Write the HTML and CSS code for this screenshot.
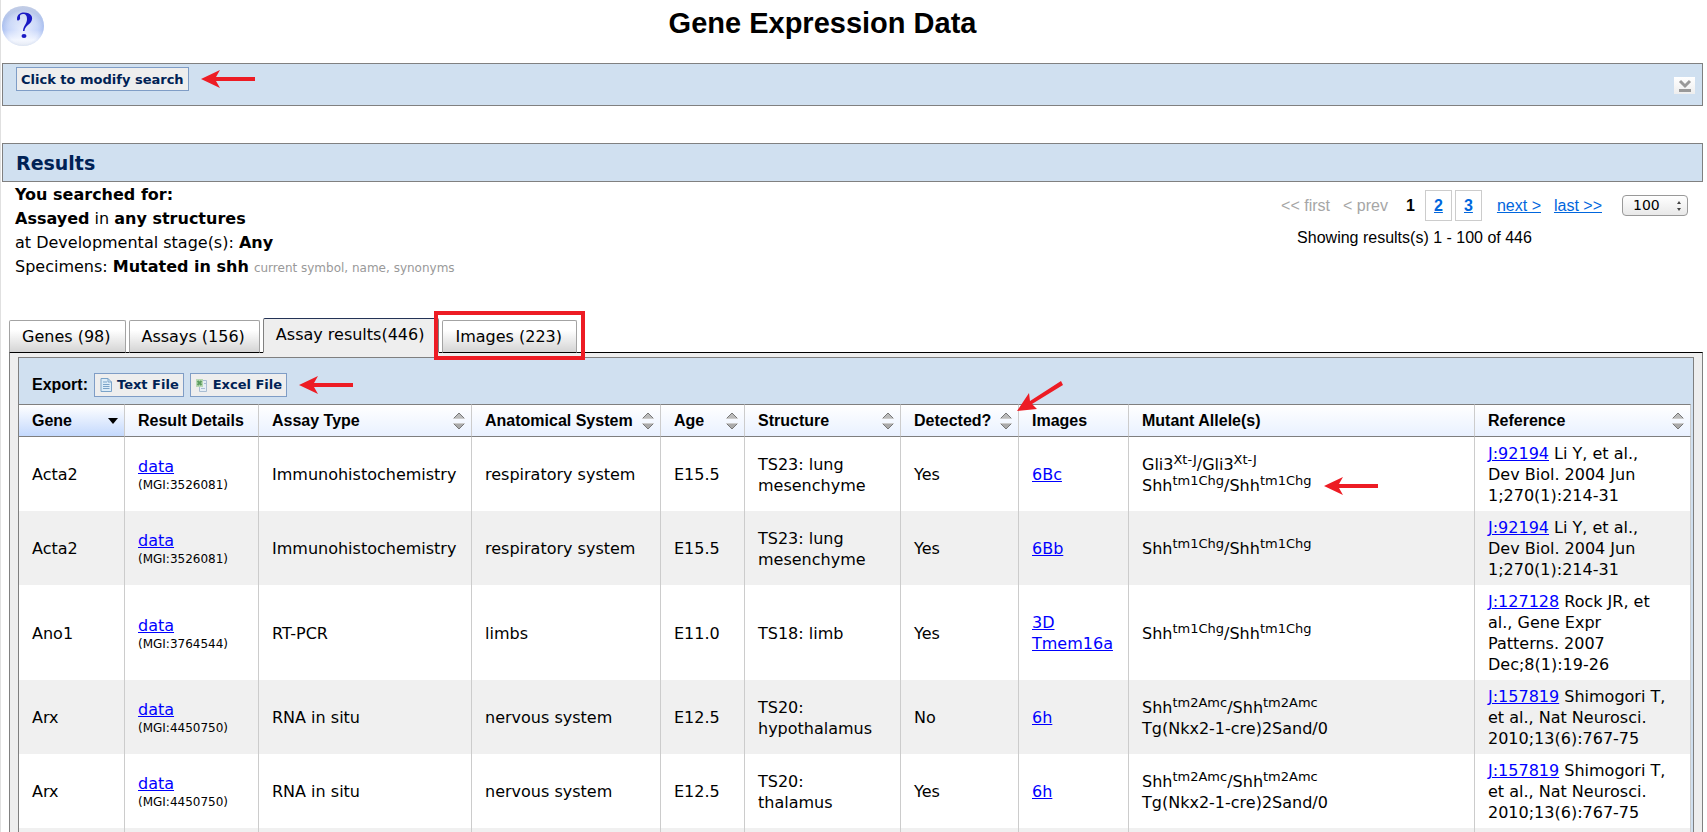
FILE: index.html
```html
<!DOCTYPE html>
<html lang="en">
<head>
<meta charset="utf-8">
<title>Gene Expression Data</title>
<link rel="stylesheet" href="styles.css">
</head>
<body>
<svg class="defs" aria-hidden="true">
  <symbol id="arrow" viewBox="0 0 54 18"><path d="M0 9L19 0L15 7H54V11H15L19 18Z" fill="#ed1c24"/></symbol>
  <symbol id="sort" viewBox="0 0 12 18">
    <path d="M6 1L11 6H1Z" fill="#bbb"/><path d="M1 6L6 1L11 6" fill="none" stroke="#777"/><path d="M0 6.5H12" stroke="#ccc"/>
    <path d="M1 12H11L6 17Z" fill="#aaa"/><path d="M1 12L6 17L11 12" fill="none" stroke="#777"/><path d="M0 11.5H12" stroke="#ccc"/>
  </symbol>
</svg>

<header class="page-header">
  <a class="help" href="#help" aria-label="Help">
    <svg width="44" height="42" viewBox="0 0 44 42">
      <defs>
        <linearGradient id="ball" x1="0" y1="0" x2="0" y2="1">
          <stop offset="0" stop-color="#d9dde8"/><stop offset=".3" stop-color="#c3d2f4"/><stop offset=".6" stop-color="#b4c8f8"/><stop offset=".85" stop-color="#eef3ff"/><stop offset="1" stop-color="#dde4f0"/>
        </linearGradient>
        <radialGradient id="shine" cx=".5" cy=".6" r=".5">
          <stop offset="0" stop-color="#fff" stop-opacity=".7"/><stop offset=".7" stop-color="#fff" stop-opacity=".25"/><stop offset="1" stop-color="#8fa8de" stop-opacity=".3"/>
        </radialGradient>
      </defs>
      <ellipse cx="21" cy="21" rx="21" ry="20" fill="url(#ball)"/>
      <ellipse cx="21" cy="21" rx="21" ry="20" fill="url(#shine)"/>
      <path d="M15 14C15 9 19 7.500 22 7.500C29 7.500 32 12 29 17C27 20 23 21 22.500 26H21C21 21 25 19 25 14C25 11 24 9 21 9C19 9 17.500 10 18 12C19 15 15 17 15 14Z" fill="#1a1ac4"/>
      <ellipse cx="22" cy="31" rx="2.500" ry="2" fill="#1a1ac4"/>
    </svg>
  </a>
  <h1 class="title">Gene Expression Data</h1>
</header>

<section class="bar search-bar">
  <div class="search-actions">
    <button class="btn" type="button">Click to modify search</button>
    <svg class="arrow" width="54" height="18"><use href="#arrow"/></svg>
  </div>
  <button class="toggle" type="button" aria-label="Expand search">
    <svg width="21" height="17" viewBox="0 0 21 17"><path d="M6 4L11 9L16 4" fill="none" stroke="#999" stroke-width="3"/><path d="M5 13.5H17" stroke="#999" stroke-width="3"/></svg>
  </button>
</section>

<section class="bar results-bar"><h2 class="results-title">Results</h2></section>

<section class="summary">
  <div class="query">
    <div><b>You searched for:</b></div>
    <div><b>Assayed</b> in <b>any structures</b></div>
    <div>at Developmental stage(s): <b>Any</b></div>
    <div>Specimens: <b>Mutated in shh</b> <span class="note">current symbol, name, synonyms</span></div>
  </div>
  <div class="paging">
    <nav class="pages" aria-label="Pages">
      <span class="off">&lt;&lt; first</span>
      <span class="off">&lt; prev</span>
      <span class="nums"><span class="current">1</span><a class="num" href="#2">2</a><a class="num" href="#3">3</a></span>
      <a href="#next">next &gt;</a>
      <a href="#last">last &gt;&gt;</a>
      <span class="size">
        <select class="size-select" aria-label="Rows per page"><option>100</option></select>
        <svg class="size-mark" width="6" height="10" viewBox="0 0 6 10"><path d="M3 0L5 3H1ZM3 10L5 7H1Z" fill="#444"/></svg>
      </span>
    </nav>
    <div class="showing">Showing results(s) 1 - 100 of 446</div>
  </div>
</section>

<main class="tabview">
  <nav class="tabs">
    <a class="tab" href="#genes">Genes (98)</a>
    <a class="tab" href="#assays">Assays (156)</a>
    <a class="tab active" href="#results">Assay results(446)</a>
    <a class="tab marked" href="#images">Images (223)</a>
  </nav>
  <div class="panel">
    <div class="sheet">
      <div class="export">
        <b class="export-label">Export:</b>
        <button class="btn" type="button">
          <svg width="14" height="16" viewBox="0 0 14 16"><path d="M2 1.500H9L12.500 5V14.500H2Z" fill="#dcecf8" stroke="#7ba3c8"/><path d="M9 1.500V5H12.500M4 5H8M4 7.500H10.500M4 9.500H10.500M4 11.500H10.500" fill="none" stroke="#7ba3c8"/></svg>
          Text File</button>
        <button class="btn" type="button">
          <svg width="14" height="16" viewBox="0 0 14 16"><path d="M4.500 3.500H11.500V14.500H4.500Z" fill="#e6eef6" stroke="#a9bdd2"/><path d="M6 11.500H10M9 6.500H11" stroke="#a9bdd2"/><path d="M1 2H8V10H1Z" fill="#b8d8b4"/><path d="M2.500 4L6.500 8M6.500 4L2.500 8" stroke="#5c9c60" stroke-width="2"/></svg>
          Excel File</button>
        <svg class="arrow" width="54" height="18"><use href="#arrow"/></svg>
      </div>
      <table class="grid">
        <colgroup><col class="c-gene"><col class="c-details"><col class="c-type"><col class="c-system"><col class="c-age"><col class="c-structure"><col class="c-detected"><col class="c-images"><col><col class="c-reference"></colgroup>
        <thead>
          <tr>
            <th class="sorted"><button class="sorter" type="button">Gene<svg width="10" height="6" viewBox="0 0 10 6"><path d="M0 0H10L5 6Z"/></svg></button></th>
            <th>Result Details</th>
            <th><button class="sorter" type="button">Assay Type<svg width="12" height="18"><use href="#sort"/></svg></button></th>
            <th><button class="sorter" type="button">Anatomical System<svg width="12" height="18"><use href="#sort"/></svg></button></th>
            <th><button class="sorter" type="button">Age<svg width="12" height="18"><use href="#sort"/></svg></button></th>
            <th><button class="sorter" type="button">Structure<svg width="12" height="18"><use href="#sort"/></svg></button></th>
            <th class="pointed"><button class="sorter" type="button">Detected?<svg width="12" height="18"><use href="#sort"/></svg></button>
              <svg class="pointer" width="48" height="32" viewBox="0 0 48 32"><path d="M0 30L12 12L13 20L44 0L46 4L15 23L20 28Z" fill="#ed1c24"/></svg></th>
            <th>Images</th>
            <th>Mutant Allele(s)</th>
            <th><button class="sorter" type="button">Reference<svg width="12" height="18"><use href="#sort"/></svg></button></th>
          </tr>
        </thead>
        <tbody>
          <tr>
            <td>Acta2</td><td><a href="#d">data</a><span class="mgi">(MGI:3526081)</span></td><td>Immunohistochemistry</td><td>respiratory system</td><td>E15.5</td><td class="roomy">TS23: lung mesenchyme</td><td>Yes</td><td><a href="#i">6Bc</a></td>
            <td>Gli3<sup>Xt-J</sup>/Gli3<sup>Xt-J</sup><br><span class="noted">Shh<sup>tm1Chg</sup>/Shh<sup>tm1Chg</sup><svg class="note-arrow" width="54" height="18"><use href="#arrow"/></svg></span></td>
            <td class="roomy"><a href="#r">J:92194</a> Li Y, et al., Dev Biol. 2004 Jun 1;270(1):214-31</td>
          </tr>
          <tr>
            <td>Acta2</td><td><a href="#d">data</a><span class="mgi">(MGI:3526081)</span></td><td>Immunohistochemistry</td><td>respiratory system</td><td>E15.5</td><td class="roomy">TS23: lung mesenchyme</td><td>Yes</td><td><a href="#i">6Bb</a></td>
            <td>Shh<sup>tm1Chg</sup>/Shh<sup>tm1Chg</sup></td>
            <td class="roomy"><a href="#r">J:92194</a> Li Y, et al., Dev Biol. 2004 Jun 1;270(1):214-31</td>
          </tr>
          <tr>
            <td>Ano1</td><td><a href="#d">data</a><span class="mgi">(MGI:3764544)</span></td><td>RT-PCR</td><td>limbs</td><td>E11.0</td><td class="roomy">TS18: limb</td><td>Yes</td><td><a href="#i">3D Tmem16a</a></td>
            <td>Shh<sup>tm1Chg</sup>/Shh<sup>tm1Chg</sup></td>
            <td class="roomy"><a href="#r">J:127128</a> Rock JR, et al., Gene Expr Patterns. 2007 Dec;8(1):19-26</td>
          </tr>
          <tr>
            <td>Arx</td><td><a href="#d">data</a><span class="mgi">(MGI:4450750)</span></td><td>RNA in situ</td><td>nervous system</td><td>E12.5</td><td class="roomy">TS20: hypothalamus</td><td>No</td><td><a href="#i">6h</a></td>
            <td>Shh<sup>tm2Amc</sup>/Shh<sup>tm2Amc</sup><br>Tg(Nkx2-1-cre)2Sand/0</td>
            <td class="roomy"><a href="#r">J:157819</a> Shimogori T, et al., Nat Neurosci. 2010;13(6):767-75</td>
          </tr>
          <tr>
            <td>Arx</td><td><a href="#d">data</a><span class="mgi">(MGI:4450750)</span></td><td>RNA in situ</td><td>nervous system</td><td>E12.5</td><td class="roomy">TS20: thalamus</td><td>Yes</td><td><a href="#i">6h</a></td>
            <td>Shh<sup>tm2Amc</sup>/Shh<sup>tm2Amc</sup><br>Tg(Nkx2-1-cre)2Sand/0</td>
            <td class="roomy"><a href="#r">J:157819</a> Shimogori T, et al., Nat Neurosci. 2010;13(6):767-75</td>
          </tr>
          <tr class="next-row"><td></td><td></td><td></td><td></td><td></td><td></td><td></td><td></td><td></td><td></td></tr>
        </tbody>
      </table>
    </div>
  </div>
</main>
</body>
</html>
```
FILE: styles.css
```css
* { box-sizing: border-box; }
body {
  margin: 0;
  padding: 0 4px 0 1px;
  border-left: 1px solid #e0e0e0;
  background: #fff;
  color: #000;
  font: 16px/21px Verdana, "DejaVu Sans", sans-serif;
}
button, select { font: inherit; }
svg { flex: none; }
.defs { position: absolute; width: 0; height: 0; }

.page-header { display: flex; align-items: flex-start; height: 63px; padding-top: 5px; }
.help { display: block; width: 44px; height: 42px; }
.title {
  flex: 1;
  margin: 0 104px 0 0;
  text-align: center;
  font: bold 29px/36px Arial, "Liberation Sans", sans-serif;
}

.bar { display: flex; border: 1px solid #808080; background: #d0e0f0; }
.search-bar { justify-content: space-between; height: 43px; padding: 3px 7px 0 13px; }
.search-actions { display: flex; align-items: flex-start; gap: 12px; }
.search-actions .arrow { margin-top: 3px; }
.btn {
  display: flex;
  align-items: center;
  gap: 4px;
  height: 24px;
  padding: 0 4px;
  border: 1px solid #7f9dc6;
  background: #eee;
  color: #025;
  font-size: 13px;
  font-weight: bold;
  white-space: nowrap;
}
.toggle {
  display: block;
  width: 21px;
  height: 17px;
  margin-top: 10px;
  padding: 0;
  border: 0;
  background: linear-gradient(#fff, #eee);
}
.toggle svg { display: block; }
.results-bar { align-items: center; height: 39px; margin-top: 37px; padding-left: 13px; }
.results-title { margin: 0; color: #025; font-size: 19px; line-height: 24px; }

.summary { display: flex; justify-content: space-between; height: 136px; padding: 0 15px 0 13px; }
.query { padding-top: 1px; line-height: 24px; }
.note { color: #999; font-size: 12px; }
.paging { padding-top: 8px; font-family: Arial, "Liberation Sans", sans-serif; }
.pages { display: flex; align-items: center; gap: 13px; height: 31px; }
.pages a { color: #06d; }
.off { color: #a6a6a6; }
.nums { display: flex; align-items: center; gap: 3px; margin-right: 2px; font-weight: bold; }
.current { width: 21px; padding-left: 5px; }
.num { width: 27px; border: 1px solid #ccc; line-height: 29px; text-align: center; }
.size { position: relative; margin-left: 7px; }
.size-select {
  display: block;
  width: 66px;
  height: 21px;
  padding: 0 10px;
  border: 1px solid #999;
  border-radius: 4px;
  appearance: none;
  background: linear-gradient(#fff, #e8e8e8);
  color: #000;
  font: 14px/19px Verdana, "DejaVu Sans", sans-serif;
}
.size-mark { position: absolute; right: 6px; top: 6px; }
.showing { margin-top: 6px; padding-left: 16px; }

.tabview { padding-left: 7px; }
.tabs { position: relative; display: flex; align-items: flex-end; gap: 3px; height: 35px; margin-bottom: -1px; }
.tab {
  height: 33px;
  padding: 0 14px 0 12px;
  border: 1px solid #a3a3a3;
  border-bottom-color: #000;
  border-radius: 2px 2px 0 0;
  background: linear-gradient(#fff 30%, #d4d4d4);
  color: #000;
  line-height: 32px;
  text-decoration: none;
  white-space: nowrap;
}
.tab.active { height: 35px; border-color: #243356 #808080 #eee; background: #eee; }
.marked { position: relative; }
.marked::after { content: ""; position: absolute; inset: -10px -9px -8px; border: 4px solid #ed1c24; }

.panel { padding: 4px 8px 0; border: solid #808080; border-width: 1px 1px 0; border-top-color: #000; background: #eee; }
.sheet { padding-right: 2px; border: solid #7f7f7f; border-width: 1px 1px 0; background: #d0e0f0; }
.export { display: flex; align-items: center; gap: 6px; height: 46px; padding: 7px 13px 0; }
.export-label { font-family: Arial, "Liberation Sans", sans-serif; }
.export .arrow { margin-left: 6px; }

.grid { width: 100%; border-collapse: separate; border-spacing: 0; table-layout: fixed; background: #fff; }
.c-gene { width: 106px; }
.c-details { width: 134px; }
.c-type { width: 213px; }
.c-system { width: 189px; }
.c-age { width: 84px; }
.c-structure { width: 156px; }
.c-detected { width: 118px; }
.c-images { width: 110px; }
.c-reference { width: 216px; }
.grid th {
  height: 33px;
  padding: 0 6px 0 13px;
  border: solid #7f7f7f;
  border-width: 1px 1px 1px 0;
  border-right-color: #ccc;
  background: linear-gradient(#fff, #e9f1ff);
  font: bold 16px/21px Arial, "Liberation Sans", sans-serif;
  text-align: left;
  white-space: nowrap;
}
.grid .sorted { background: linear-gradient(#fff, #c4d9fd); }
.sorter {
  display: flex;
  align-items: center;
  justify-content: space-between;
  width: 100%;
  padding: 0;
  border: 0;
  background: none;
  color: #000;
}
.pointed { position: relative; }
.pointer { position: absolute; left: 116px; top: -24px; }
.grid td { height: 74px; padding: 6px 12px 5px 13px; border-right: 1px solid #ccc; }
.grid .roomy { padding-right: 24px; }
.grid tbody tr:nth-child(even) { background: #f0f0f0; }
.grid .next-row td { height: 6px; padding: 0; }
.grid a { color: #00f; }
.mgi { display: block; font-size: 12px; line-height: 16px; }
sup { font-size: 13px; line-height: 0; }
.noted { position: relative; }
.note-arrow { position: absolute; left: 100%; top: 1px; margin-left: 13px; }
```
